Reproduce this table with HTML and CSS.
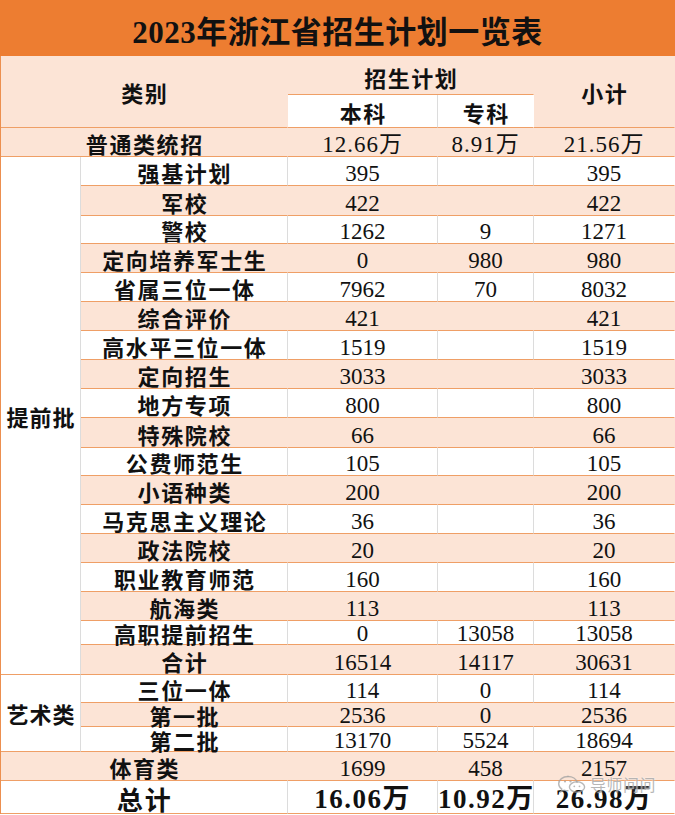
FILE: index.html
```html
<!DOCTYPE html>
<html lang="zh-CN">
<head>
<meta charset="utf-8">
<title>2023年浙江省招生计划一览表</title>
<link rel="stylesheet" href="styles.css">
</head>
<body>
<div class="sheet">
  <div class="title">2023年浙江省招生计划一览表</div>
  <table class="plan">
    <colgroup>
      <col class="c1"><col class="c2"><col class="c3"><col class="c4"><col class="c5">
    </colgroup>
    <tbody>
      <tr class="pk hd1">
        <td class="hd" rowspan="2" colspan="2">类别</td>
        <td class="hd grp" colspan="2">招生计划</td>
        <td class="hd" rowspan="2">小计</td>
      </tr>
      <tr class="hd2">
        <td class="hd sub">本科</td>
        <td class="hd sub sub-last">专科</td>
      </tr>
      <tr class="pk h29">
        <td class="nm" colspan="2">普通类统招</td>
        <td class="num wan">12.66万</td><td class="num wan">8.91万</td><td class="num wan">21.56万</td>
      </tr>

      <tr class="h29">
        <td class="cat" rowspan="18">提前批</td>
        <td class="nm">强基计划</td><td class="num">395</td><td class="num"></td><td class="num">395</td>
      </tr>
      <tr class="pk h30"><td class="nm">军校</td><td class="num">422</td><td class="num"></td><td class="num">422</td></tr>
      <tr class="h28"><td class="nm">警校</td><td class="num">1262</td><td class="num">9</td><td class="num">1271</td></tr>
      <tr class="pk h29"><td class="nm">定向培养军士生</td><td class="num">0</td><td class="num">980</td><td class="num">980</td></tr>
      <tr class="h29"><td class="nm">省属三位一体</td><td class="num">7962</td><td class="num">70</td><td class="num">8032</td></tr>
      <tr class="pk h29"><td class="nm">综合评价</td><td class="num">421</td><td class="num"></td><td class="num">421</td></tr>
      <tr class="h29"><td class="nm">高水平三位一体</td><td class="num">1519</td><td class="num"></td><td class="num">1519</td></tr>
      <tr class="pk h29"><td class="nm">定向招生</td><td class="num">3033</td><td class="num"></td><td class="num">3033</td></tr>
      <tr class="h29"><td class="nm">地方专项</td><td class="num">800</td><td class="num"></td><td class="num">800</td></tr>
      <tr class="pk h30"><td class="nm">特殊院校</td><td class="num">66</td><td class="num"></td><td class="num">66</td></tr>
      <tr class="h28"><td class="nm">公费师范生</td><td class="num">105</td><td class="num"></td><td class="num">105</td></tr>
      <tr class="pk h29"><td class="nm">小语种类</td><td class="num">200</td><td class="num"></td><td class="num">200</td></tr>
      <tr class="h29"><td class="nm">马克思主义理论</td><td class="num">36</td><td class="num"></td><td class="num">36</td></tr>
      <tr class="pk h29"><td class="nm">政法院校</td><td class="num">20</td><td class="num"></td><td class="num">20</td></tr>
      <tr class="h29"><td class="nm">职业教育师范</td><td class="num">160</td><td class="num"></td><td class="num">160</td></tr>
      <tr class="pk h29"><td class="nm">航海类</td><td class="num">113</td><td class="num"></td><td class="num">113</td></tr>
      <tr class="h24 tight"><td class="nm">高职提前招生</td><td class="num">0</td><td class="num">13058</td><td class="num">13058</td></tr>
      <tr class="pk h30"><td class="nm">合计</td><td class="num">16514</td><td class="num">14117</td><td class="num">30631</td></tr>

      <tr class="h28">
        <td class="cat" rowspan="3">艺术类</td>
        <td class="nm">三位一体</td><td class="num">114</td><td class="num">0</td><td class="num">114</td>
      </tr>
      <tr class="pk h24 tight"><td class="nm">第一批</td><td class="num">2536</td><td class="num">0</td><td class="num">2536</td></tr>
      <tr class="h25 tight"><td class="nm">第二批</td><td class="num">13170</td><td class="num">5524</td><td class="num">18694</td></tr>

      <tr class="pk h29">
        <td class="nm" colspan="2">体育类</td>
        <td class="num">1699</td><td class="num">458</td><td class="num">2157</td>
      </tr>
      <tr class="h33 total">
        <td class="nm" colspan="2">总计</td>
        <td class="num wan">16.06万</td><td class="num wan">10.92万</td><td class="num wan">26.98万</td>
      </tr>
    </tbody>
  </table>

  <div class="watermark">
    <svg class="wm-icon" width="30" height="18" viewBox="0 0 30 18" aria-hidden="true">
      <path d="M11 1.5c-5.2 0-9.3 3.2-9.3 7.2 0 2.2 1.2 4.1 3.1 5.4l-0.8 2.6 3-1.5c1.2 0.4 2.5 0.6 3.9 0.6" fill="none" stroke="currentColor" stroke-width="1.4" stroke-linecap="round"/>
      <path d="M20.1 7.2c-0.9-3.3-4.6-5.7-9.1-5.7" fill="none" stroke="currentColor" stroke-width="1.4" stroke-linecap="round"/>
      <ellipse cx="20" cy="12" rx="7.6" ry="5.2" fill="none" stroke="currentColor" stroke-width="1.4"/>
      <circle cx="8" cy="6.5" r="1.1" fill="currentColor"/>
      <circle cx="13.5" cy="6.5" r="1.1" fill="currentColor"/>
      <circle cx="17.3" cy="11.3" r="0.9" fill="currentColor"/>
      <circle cx="22.5" cy="11.3" r="0.9" fill="currentColor"/>
    </svg>
    <span class="wm-text">导师问问</span>
  </div>
</div>
</body>
</html>
```

FILE: styles.css
```css
* {
  box-sizing: border-box;
}

html, body {
  margin: 0;
  padding: 0;
  background: #ffffff;
}

body {
  font-family: "Noto Sans CJK SC", "Noto Sans", sans-serif;
  color: #111111;
}

.sheet {
  position: relative;
  width: 675px;
}

.title {
  height: 56px;
  background: #ed7d31;
  display: flex;
  align-items: center;
  justify-content: center;
  padding-top: 3px;
  font-family: "Liberation Serif", "Noto Sans CJK SC", serif;
  font-size: 31px;
  font-weight: 700;
  color: #111111;
  letter-spacing: 0.5px;
}

.plan {
  width: 675px;
  table-layout: fixed;
  border-collapse: separate;
  border-spacing: 0;
  border-left: 1px solid #ec8f4f;
}

.c1 { width: 80px; }
.c2 { width: 207px; }
.c3 { width: 150px; }
.c4 { width: 96px; }
.c5 { width: 141px; }

.plan td {
  padding: 0;
  text-align: center;
  vertical-align: bottom;
  border-right: 1px solid #dcdcdc;
  border-bottom: 1px solid #ef9f66;
  background: #ffffff;
  white-space: nowrap;
}

.plan tr.pk td {
  background: #fce4d6;
  border-right-color: transparent;
}

.plan td:last-child {
  border-right-color: transparent;
}

/* row heights */
.hd1 { height: 39px; }
.hd2 { height: 33px; }
.h24 { height: 24px; }
.h25 { height: 25px; }
.h28 { height: 28px; }
.h29 { height: 29px; }
.h30 { height: 30px; }
.h33 { height: 33px; }

/* header */
.plan td.hd {
  vertical-align: middle;
  font-size: 22px;
  font-weight: 700;
  line-height: 24px;
  letter-spacing: 1.5px;
  padding-left: 1.5px;
  background: #fce4d6;
  border-right-color: transparent;
}

.plan td.grp {
  vertical-align: bottom;
  padding-bottom: 5px;
}

.plan td.sub {
  background: #ffffff;
  border-right-color: #dcdcdc;
  vertical-align: bottom;
  padding-bottom: 3px;
}

.plan td.sub-last {
  border-right-color: transparent;
}

/* category (merged) */
.plan td.cat {
  vertical-align: middle;
  background: #ffffff;
  font-size: 22px;
  font-weight: 700;
  line-height: 24px;
  letter-spacing: 1px;
  padding-left: 1px;
  border-right-color: #dcdcdc;
}

/* item names */
.plan td.nm {
  font-size: 22px;
  font-weight: 700;
  line-height: 22px;
  letter-spacing: 1.6px;
  padding-left: 1.6px;
  padding-bottom: 2px;
}

/* numbers */
.plan td.num {
  font-family: "Liberation Serif", "Noto Sans CJK SC", serif;
  font-size: 23px;
  font-weight: 400;
  line-height: 22px;
}

.plan td.wan {
  letter-spacing: 1px;
}

.plan tr.tight td.nm {
  padding-bottom: 0;
  line-height: 21px;
}

.plan tr.tight td.num {
  line-height: 21px;
}

/* grand total row */
.plan tr.total td.nm {
  font-size: 26px;
  line-height: 26px;
  letter-spacing: 2px;
  padding-bottom: 1px;
}

.plan tr.total td.num {
  font-size: 27px;
  font-weight: 700;
  line-height: 26px;
  padding-bottom: 1px;
  letter-spacing: 1.5px;
}

/* watermark overlay */
.watermark {
  position: absolute;
  left: 557px;
  top: 775px;
  display: flex;
  align-items: center;
  gap: 3px;
  color: rgba(160, 160, 160, 0.75);
  pointer-events: none;
}

.wm-icon {
  display: block;
}

.wm-text {
  font-family: "Noto Sans CJK SC", sans-serif;
  font-size: 16px;
  line-height: 18px;
  letter-spacing: 0.5px;
  text-shadow: 0 0 2px rgba(255, 255, 255, 0.9);
}
```
